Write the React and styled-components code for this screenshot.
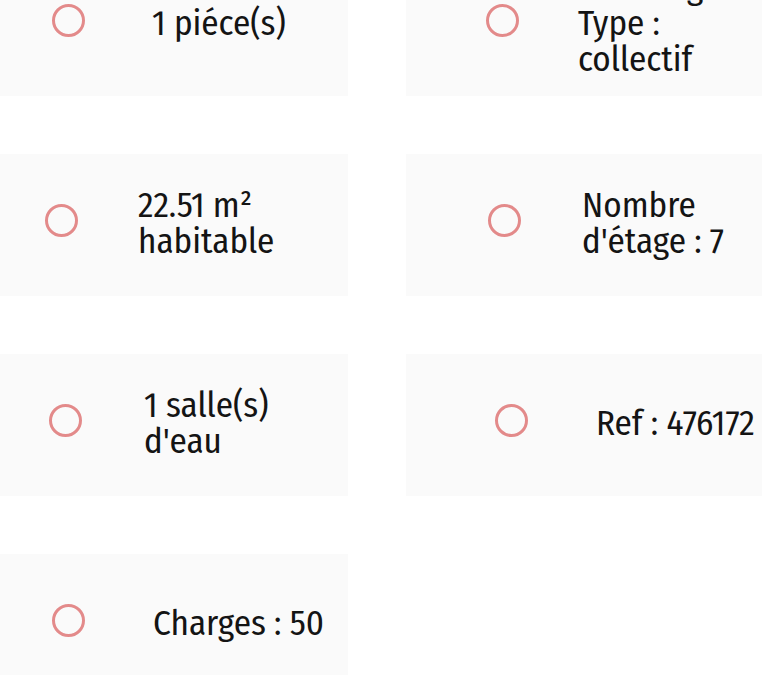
import React from 'react';
import styled, { createGlobalStyle } from 'styled-components';

const GlobalStyle = createGlobalStyle`
  html, body {
    margin: 0;
    background: #ffffff;
    overflow: hidden;
  }
`;

const Page = styled.div`
  width: 762px;
  height: 675px;
  overflow: hidden;
  background: #ffffff;
`;

const Grid = styled.div`
  width: 824px;
  margin-left: -35px;
  margin-top: -46px;
  display: grid;
  grid-template-columns: 383px 383px;
  column-gap: 58px;
  row-gap: 58px;
`;

const Card = styled.div`
  height: 142px;
  background: #fafafa;
  display: flex;
  align-items: center;
  padding-left: ${p => p.$pad}px;
  gap: ${p => p.$gap}px;
  box-sizing: border-box;
`;

const Radio = styled.span`
  flex: none;
  width: 33px;
  height: 33px;
  border-radius: 50%;
  border: 3px solid #e38a8a;
  box-sizing: border-box;
  margin-bottom: 10px;
`;

const Label = styled.div`
  font-family: "Fira Sans Condensed", "Roboto", sans-serif;
  font-size: 35px;
  line-height: 36px;
  color: #141414;
  margin-bottom: 4px;
  white-space: nowrap;

  span {
    display: block;
  }
`;

const features = [
  { lines: ['1 piéce(s)'], pad: 87, gap: 67 },
  { lines: ['Chauffage', 'Type :', 'collectif'], pad: 80, gap: 59 },
  { lines: ['22.51 m²', 'habitable'], pad: 80, gap: 60 },
  { lines: ['Nombre', "d'étage : 7"], pad: 82, gap: 61 },
  { lines: ['1 salle(s)', "d'eau"], pad: 84, gap: 62 },
  { lines: ['Ref : 476172'], pad: 89, gap: 68 },
  { lines: ['Charges : 50'], pad: 87, gap: 68 },
];

const Feature = ({ lines, pad, gap }) => (
  <Card $pad={pad} $gap={gap}>
    <Radio />
    <Label>
      {lines.map((line, i) => (
        <span key={i}>{line}</span>
      ))}
    </Label>
  </Card>
);

export default function App() {
  return (
    <Page>
      <GlobalStyle />
      <Grid>
        {features.map((f, i) => (
          <Feature key={i} {...f} />
        ))}
      </Grid>
    </Page>
  );
}
